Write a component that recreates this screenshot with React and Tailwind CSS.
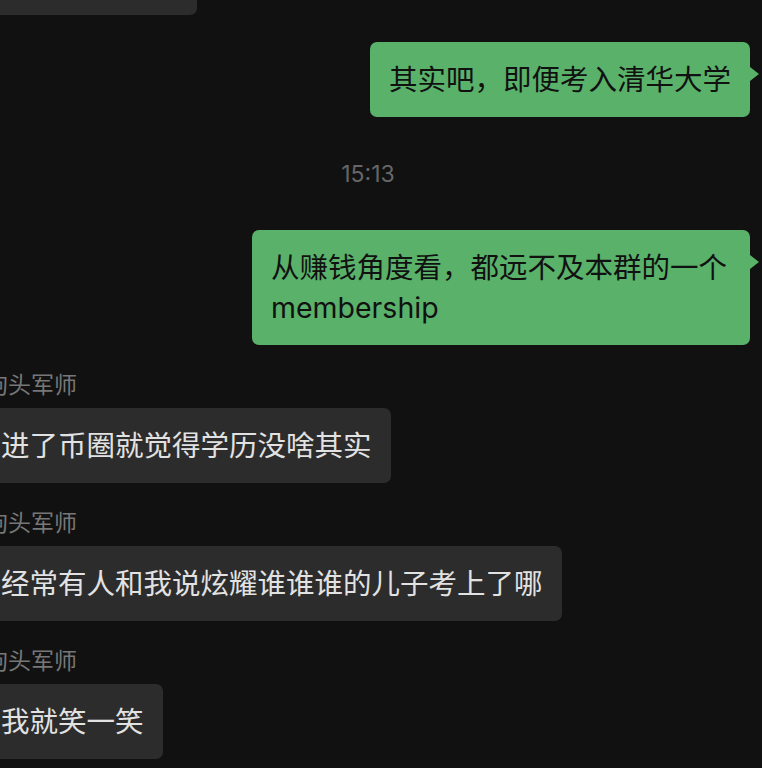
import React from "react";

const FONT = { fontFamily: 'Inter, "Noto Sans CJK SC", sans-serif' };

function Mine({ text, className = "" }) {
  return (
    <div className={`flex justify-end pr-[12px] ${className}`}>
      <div className="relative max-w-[498px] rounded-[7px] bg-[#5ab26a] px-[19px] pt-[18px] pb-[17px] text-[28.5px] leading-[40px] text-[#111]">
        {text}
        <span className="absolute right-[-9px] top-[25px] h-0 w-0 border-y-[7px] border-l-[9px] border-y-transparent border-l-[#5ab26a]" />
      </div>
    </div>
  );
}

function Theirs({ name, text }) {
  return (
    <div className="ml-[-18px] mt-[25px] flex flex-col items-start">
      <div className="pl-[3px] text-[23px] leading-[30px] text-[#777]">{name}</div>
      <div className="mt-[8px] rounded-[7px] bg-[#2c2c2c] px-[19px] pt-[18px] pb-[17px] text-[28.5px] leading-[40px] text-[#e2e2e2]">
        {text}
      </div>
    </div>
  );
}

export default function App() {
  return (
    <div className="min-h-screen overflow-hidden bg-[#111111]" style={FONT}>
      <div className="ml-[-18px] h-[15px] w-[215px] rounded-b-[7px] bg-[#2c2c2c]" />

      <Mine className="mt-[27px]" text="其实吧，即便考入清华大学" />

      <div className="mt-[42px] flex justify-center pr-[26px] text-[23px] leading-[30px] text-[#666]">
        15:13
      </div>

      <Mine className="mt-[41px]" text="从赚钱角度看，都远不及本群的一个membership" />

      <Theirs name="狗头军师" text="进了币圈就觉得学历没啥其实" />
      <Theirs name="狗头军师" text="经常有人和我说炫耀谁谁谁的儿子考上了哪" />
      <Theirs name="狗头军师" text="我就笑一笑" />
    </div>
  );
}
